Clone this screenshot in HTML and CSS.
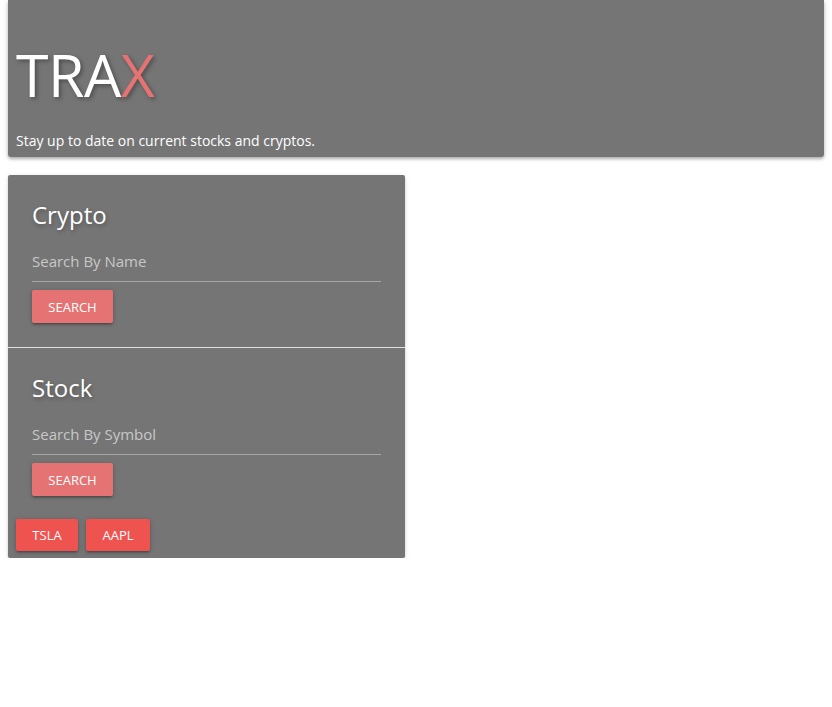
FILE: index.html
```html
<!DOCTYPE html>
<html>
<head>
<meta charset="utf-8">
<link rel="stylesheet" href="styles.css">
</head>
<body>
<header class="hero">
  <h1 class="logo">TRA<span class="logo-x">X</span></h1>
  <p class="tagline">Stay up to date on current stocks and cryptos.</p>
</header>
<main class="panel">
  <section class="panel-section">
    <h2 class="section-title">Crypto</h2>
    <input class="search-input" type="text" placeholder="Search By Name">
    <button class="btn btn-search">SEARCH</button>
  </section>
  <section class="panel-section with-divider last">
    <h2 class="section-title">Stock</h2>
    <input class="search-input" type="text" placeholder="Search By Symbol">
    <button class="btn btn-search">SEARCH</button>
  </section>
  <div class="quick-row">
    <button class="btn btn-quick tsla">TSLA</button>
    <button class="btn btn-quick aapl">AAPL</button>
  </div>
</main>
</body>
</html>
```

FILE: styles.css
```css
* { box-sizing: border-box; }
html, body { margin: 0; padding: 0; background: #fff; }
body {
  font-family: "Open Sans", "Noto Sans", sans-serif;
  padding: 0 8px;
  width: 832px;
}
.hero {
  background: #757575;
  border-radius: 0 0 3px 3px;
  box-shadow: 0 2px 3px rgba(0,0,0,0.25), 0 1px 6px rgba(0,0,0,0.12);
  padding: 38px 8px 6px;
  height: 157px;
}
.logo {
  margin: 0;
  font-weight: 400;
  font-size: 59px;
  line-height: 72px;
  color: #fff;
  letter-spacing: -0.5px;
  text-shadow: 2px 2px 4px rgba(0,0,0,0.35);
}
.logo-x { color: #e57373; }
.tagline {
  margin: 21px 0 0;
  color: #fff;
  font-size: 14px;
  line-height: 20px;
}
.panel {
  margin-top: 18px;
  width: 397px;
  background: #757575;
  border-radius: 2px;
  box-shadow: 0 2px 2px rgba(0,0,0,0.14), 0 1px 5px rgba(0,0,0,0.12), 0 3px 1px -2px rgba(0,0,0,0.2);
}
.panel-section {
  padding: 24px 24px 24px;
  display: flex;
  flex-direction: column;
  align-items: flex-start;
}
.panel-section.last { padding-bottom: 23px; }
.with-divider { border-top: 1px solid #e0e0e0; }
.section-title {
  margin: 0;
  font-weight: 400;
  font-size: 24px;
  line-height: 32px;
  color: #fff;
  text-shadow: 1px 2px 4px rgba(0,0,0,0.3);
}
.search-input {
  margin-top: 8px;
  width: 349px;
  height: 43px;
  border: none;
  border-bottom: 1px solid #a6a6a6;
  background: transparent;
  font-family: inherit;
  font-size: 15px;
  color: #fff;
  padding: 1px 0 0;
  outline: none;
}
.search-input::placeholder { color: #c8c8c8; }
.btn {
  border: none;
  border-radius: 2px;
  color: #fff;
  font-family: inherit;
  font-size: 13px;
  box-shadow: 0 2px 2px rgba(0,0,0,0.14), 0 3px 1px -2px rgba(0,0,0,0.12), 0 1px 5px rgba(0,0,0,0.2);
  cursor: pointer;
  padding: 0;
}
.btn-search {
  margin-top: 8px;
  width: 81px;
  height: 33px;
  background: #e57373;
}
.quick-row {
  display: flex;
  gap: 8px;
  padding: 0 8px 7px;
}
.btn-quick {
  height: 32px;
  background: #ef5350;
  font-weight: 500;
  font-size: 13px;
}
.tsla { width: 62px; }
.aapl { width: 64px; }
```
